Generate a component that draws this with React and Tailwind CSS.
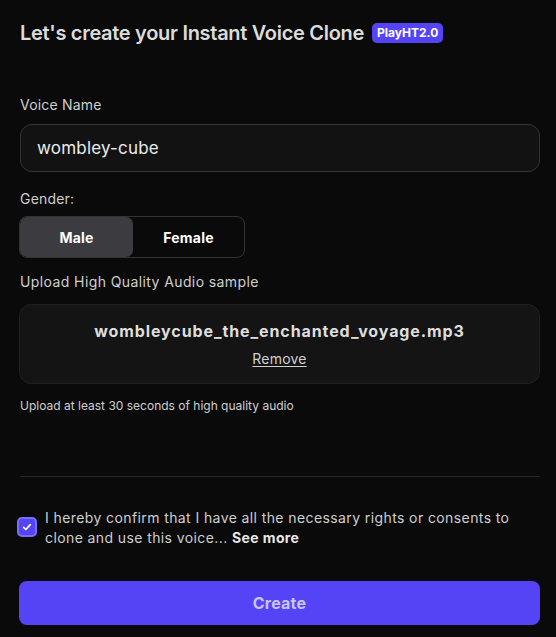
import { useState } from 'react';

export default function App() {
  const [gender, setGender] = useState('male');
  const [agreed, setAgreed] = useState(true);

  return (
    <div
      className="min-h-screen w-full bg-[#0a0a0a] text-[#e2e2e2] pl-[20px] pr-[16px] pt-[20px] pb-[8px] tracking-[0.2px]"
      style={{ fontFamily: 'Inter, "Noto Sans", sans-serif' }}
    >
      <div className="flex items-center gap-[8px] h-[26px]">
        <h2 className="text-[20px] font-semibold tracking-[-0.3px] text-[#dcdcdc]">
          Let's create your Instant Voice Clone
        </h2>
        <span className="bg-[#5544f6] text-white text-[12px] font-bold px-[5px] h-[20px] flex items-center rounded-[5px] tracking-normal">
          PlayHT2.0
        </span>
      </div>

      <div className="mt-[49px] text-[14px] text-[#cfcfcf] leading-[20px]">Voice Name</div>
      <input
        defaultValue="wombley-cube"
        className="mt-[9px] w-full h-[48px] rounded-[12px] border border-[#333336] bg-[#121212] px-[16px] text-[17px] text-[#ececec] outline-none tracking-[0.2px]"
        style={{ fontFamily: 'Inter, "Noto Sans", sans-serif' }}
      />

      <div className="mt-[17px] text-[14px] text-[#cfcfcf] leading-[20px]">Gender:</div>
      <div className="mt-[7px] flex w-[226px] h-[42px] rounded-[8px] border border-[#333336] overflow-hidden ml-[-1px]">
        <button
          onClick={() => setGender('male')}
          className={`w-[113px] h-full text-[14px] font-bold rounded-[7px] ${
            gender === 'male' ? 'bg-[#3b3b40] text-white' : 'text-white'
          }`}
        >
          Male
        </button>
        <button
          onClick={() => setGender('female')}
          className={`flex-1 h-full text-[14px] font-bold rounded-[7px] ${
            gender === 'female' ? 'bg-[#3b3b40] text-white' : 'text-white'
          }`}
        >
          Female
        </button>
      </div>

      <div className="mt-[14px] text-[14px] text-[#cfcfcf] leading-[20px] tracking-[0.4px]">Upload High Quality Audio sample</div>
      <div className="mt-[12px] ml-[-1px] w-[calc(100%+1px)] h-[80px] rounded-[12px] border border-[#202022] bg-[#141414] flex flex-col items-center justify-center">
        <div className="text-[16px] font-bold text-[#dedede] leading-[22px] tracking-[0.9px]">wombleycube_the_enchanted_voyage.mp3</div>
        <button className="mt-[8px] text-[14px] text-[#d0d0d0] underline underline-offset-2 leading-[18px]">Remove</button>
      </div>

      <div className="mt-[14px] text-[12px] text-[#d0d0d0] leading-[16px] tracking-normal">Upload at least 30 seconds of high quality audio</div>

      <div className="mt-[62px] h-px bg-[#262628]" />

      <div className="mt-[31px] flex items-start gap-[8px] ml-[-3px]">
        <button
          onClick={() => setAgreed(!agreed)}
          className={`mt-[9px] w-[20px] h-[20px] shrink-0 rounded-[5px] border-2 flex items-center justify-center ${
            agreed ? 'bg-[#5544f6] border-[#7b6dff]' : 'border-[#555]'
          }`}
        >
          {agreed && (
            <svg width="10" height="10" viewBox="0 0 12 12" fill="none">
              <path d="M2 6.5l2.6 2.5L10 3.2" stroke="white" strokeWidth="2" strokeLinecap="round" strokeLinejoin="round" />
            </svg>
          )}
        </button>
        <p className="text-[14px] leading-[20px] text-[#cfcfcf] tracking-[0.4px] pr-[12px]">
          I hereby confirm that I have all the necessary rights or consents to clone and use this voice...{' '}
          <span className="font-bold text-[#e8e8e8]">See more</span>
        </p>
      </div>

      <button className="mt-[33px] ml-[-1px] w-[calc(100%+1px)] h-[44px] rounded-[8px] bg-[#5544f6] text-[16px] font-bold text-[#c9c4f2]">
        Create
      </button>
    </div>
  );
}
